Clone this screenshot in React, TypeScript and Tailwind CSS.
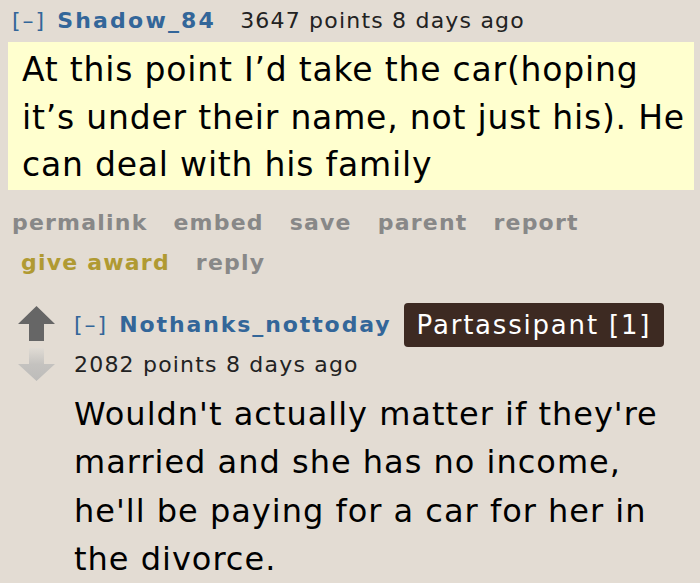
export default function App() {
  const verdana = { fontFamily: '"DejaVu Sans", Verdana, sans-serif' }
  return (
    <div className="w-[700px] h-[583px] overflow-hidden bg-[#e3dcd3] text-[#222]" style={verdana}>
      <div className="pl-[12px] pt-[1px] h-[40px] flex items-center gap-[24px] text-[22px] leading-none tracking-[1.2px]">
        <span className="text-[#336699] flex items-center gap-[11px]">
          <span className="font-normal tracking-[2px]">[–]</span>
          <span className="font-bold tracking-[2.2px]">Shadow_84</span>
        </span>
        <span className="tracking-[1.2px]">3647 points 8 days ago</span>
      </div>
      <div className="mx-[8px] mt-[2px] w-[686px] bg-[#ffffcf] pl-[14px] pr-[8px] pt-[4px] pb-[1px] text-[33px] leading-[47.5px] tracking-[0.8px] text-black">
        At this point I’d take the car(hoping it’s under their name, not just his). He can deal with his family
      </div>
      <div className="mt-[13px] pl-[12px] text-[22px] font-bold text-[#888] leading-[40px] tracking-[1.2px]">
        <div className="flex gap-[26px]">
          <span>permalink</span>
          <span>embed</span>
          <span>save</span>
          <span>parent</span>
          <span>report</span>
        </div>
        <div className="flex gap-[26px] pl-[9px]">
          <span className="text-[#b09a32]">give award</span>
          <span>reply</span>
        </div>
      </div>
      <div className="flex mt-[18px]">
        <div className="w-[74px] flex flex-col items-start pl-[18px] pt-[5px] gap-[7px]">
          <svg width="37" height="35" viewBox="0 0 37 35">
            <path d="M18.5 0 L37 18 L26 18 L26 35 L11 35 L11 18 L0 18 Z" fill="#666" />
          </svg>
          <svg width="37" height="33" viewBox="0 0 37 33">
            <defs>
              <linearGradient id="dg" x1="0" y1="0" x2="0" y2="1">
                <stop offset="0" stopColor="#e0dbd4" />
                <stop offset="0.5" stopColor="#c4c2bf" />
                <stop offset="1" stopColor="#bdbcba" />
              </linearGradient>
            </defs>
            <path d="M11 0 L26 0 L26 16 L37 16 L18.5 33 L0 16 L11 16 Z" fill="url(#dg)" />
          </svg>
        </div>
        <div className="flex-1">
          <div className="flex items-center h-[44px] mt-[2px] text-[22px] leading-none">
            <span className="text-[#336699] flex items-center gap-[11px]">
              <span className="font-normal tracking-[2px]">[–]</span>
              <span className="font-bold tracking-[1.9px]">Nothanks_nottoday</span>
            </span>
            <span className="ml-[12px] bg-[#3d2a22] text-white rounded-[4px] h-[44px] px-[13px] flex items-center text-[26px] tracking-[1.8px]">
              Partassipant [1]
            </span>
          </div>
          <div className="text-[22px] leading-[36px] tracking-[1.2px]">2082 points 8 days ago</div>
          <div
            className="text-[32px] leading-[48.5px] tracking-[1px] text-black mt-[7px] pr-[20px]"
            style={{ fontFamily: '"DejaVu Sans", Tahoma, "Liberation Sans", sans-serif' }}
          >
            Wouldn't actually matter if they're married and she has no income, he'll be paying for a car for her in the divorce.
          </div>
        </div>
      </div>
    </div>
  )
}
